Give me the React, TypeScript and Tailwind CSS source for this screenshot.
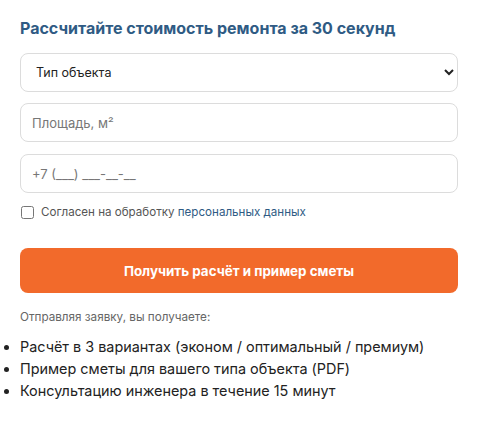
import { useState } from "react";

const points = [
  "Расчёт в 3 вариантах (эконом / оптимальный / премиум)",
  "Пример сметы для вашего типа объекта (PDF)",
  "Консультацию инженера в течение 15 минут",
];

export default function App() {
  const [agree, setAgree] = useState(false);

  return (
    <div className="min-h-screen bg-white font-['Inter',sans-serif] text-[#222]">
      <form className="px-5 pt-4" onSubmit={(e) => e.preventDefault()}>
        <h2 className="text-[16px] font-bold leading-6 text-[#2f5b84]">
          Рассчитайте стоимость ремонта за 30 секунд
        </h2>

        <select
          defaultValue=""
          className="mt-[13px] block h-[39px] w-full rounded-lg border border-[#dcdcdc] bg-white px-[11px] text-[12.5px] text-[#222]"
        >
          <option value="">Тип объекта</option>
          <option value="flat">Квартира</option>
          <option value="house">Дом</option>
          <option value="office">Офис</option>
        </select>

        <input
          type="text"
          placeholder="Площадь, м²"
          className="mt-[11px] block h-[39px] w-full rounded-lg border border-[#dcdcdc] px-[11px] text-[13px] placeholder:text-[#777]"
        />

        <input
          type="tel"
          placeholder="+7 (___) ___-__-__"
          className="mt-[12px] block h-[39px] w-full rounded-lg border border-[#dcdcdc] px-[11px] text-[13px] placeholder:text-[#777]"
        />

        <label className="mt-[11px] flex items-center gap-[7px] text-[11.6px] text-[#555]">
          <input
            type="checkbox"
            checked={agree}
            onChange={(e) => setAgree(e.target.checked)}
            className="m-0 ml-px h-[13px] w-[13px]"
          />
          <span>
            Согласен на обработку{" "}
            <a href="#" className="text-[#2f5b84]">
              персональных данных
            </a>
          </span>
        </label>

        <button
          type="submit"
          className="mt-[27px] h-[45px] w-full rounded-lg bg-[#f26a2b] text-[13.4px] font-bold text-white"
        >
          Получить расчёт и пример сметы
        </button>

        <p className="mt-[16px] text-[11.7px] text-[#666]">Отправляя заявку, вы получаете:</p>

        <ul className="mt-[9px] list-disc pl-0 text-[14.4px] leading-[22px] text-[#222] marker:text-[#222]">
          {points.map((p) => (
            <li key={p}>{p}</li>
          ))}
        </ul>
      </form>
    </div>
  );
}
